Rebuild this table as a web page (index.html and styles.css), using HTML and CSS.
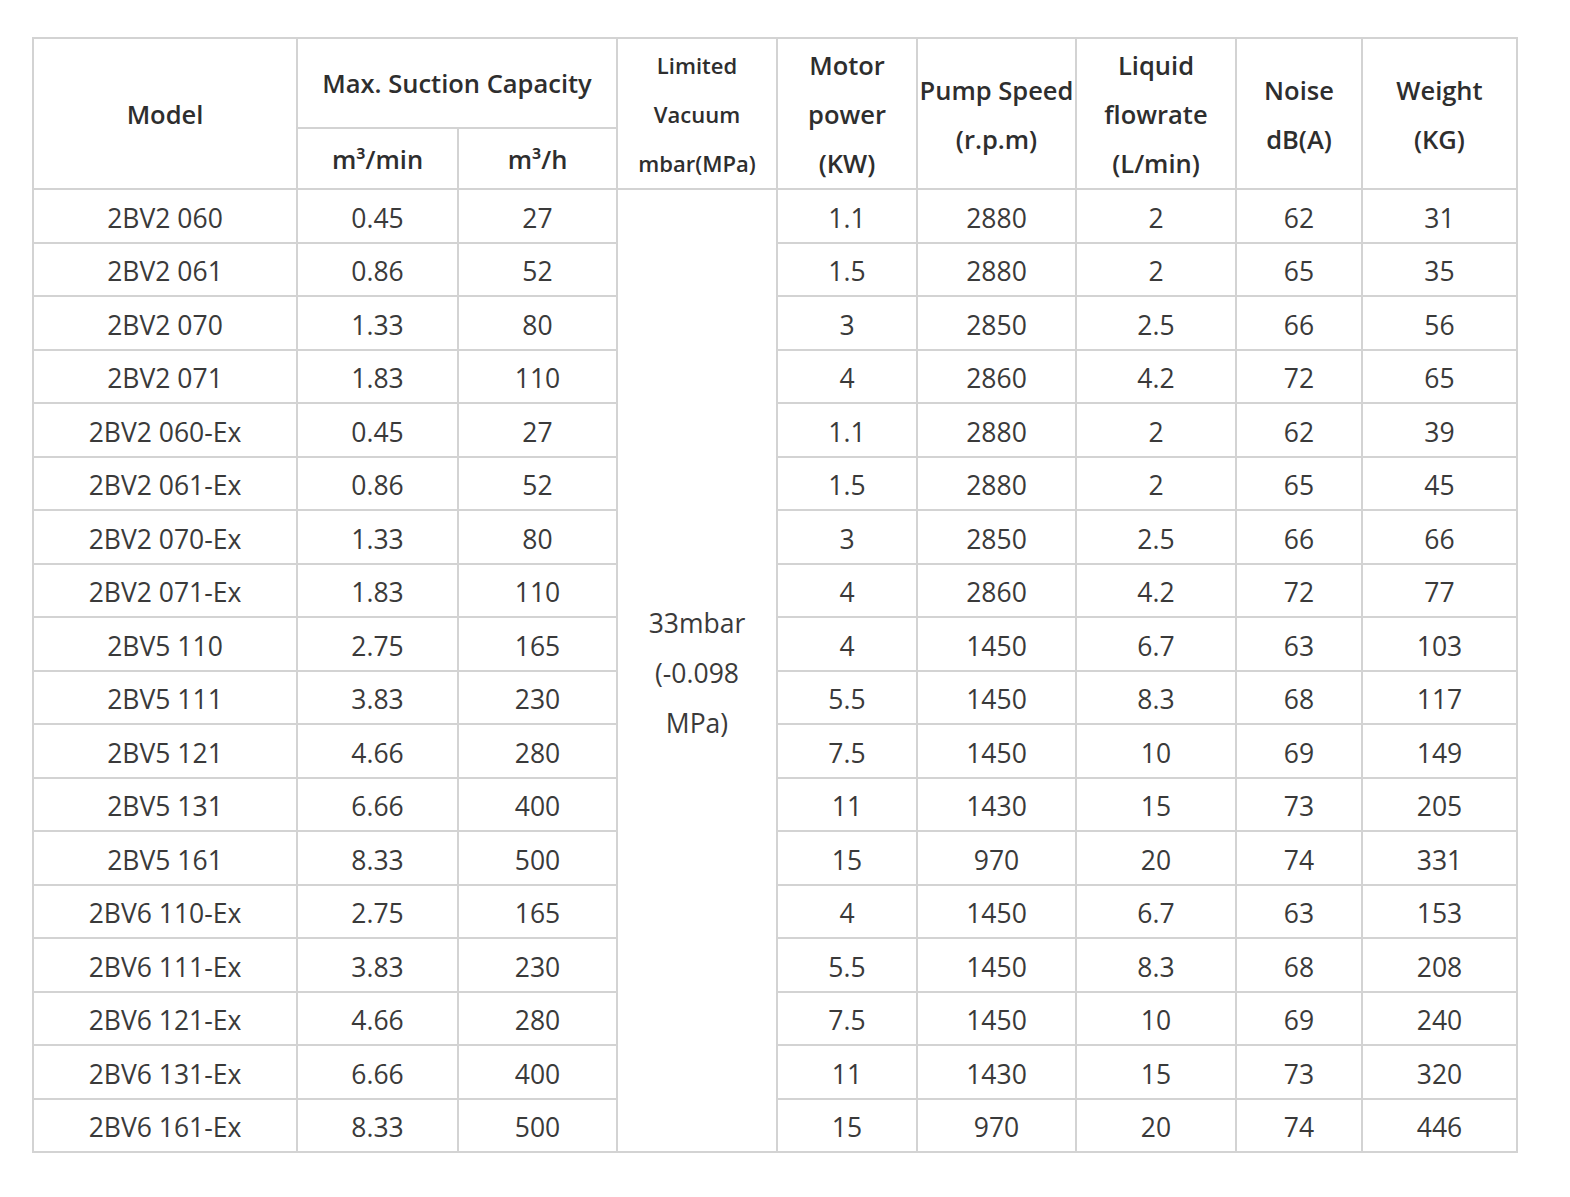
FILE: index.html
```html
<!DOCTYPE html>
<html lang="en">
<head>
<meta charset="utf-8">
<title>2BV Pump Specifications</title>
<link rel="stylesheet" href="styles.css">
</head>
<body>
<div class="page">
<table class="spec">
  <colgroup>
    <col class="c-model">
    <col class="c-min">
    <col class="c-h">
    <col class="c-vac">
    <col class="c-motor">
    <col class="c-speed">
    <col class="c-flow">
    <col class="c-noise">
    <col class="c-weight">
  </colgroup>
  <thead>
    <tr class="h1">
      <th rowspan="2">Model</th>
      <th colspan="2">Max. Suction Capacity</th>
      <th rowspan="2" class="small">Limited<br>Vacuum<br>mbar(MPa)</th>
      <th rowspan="2">Motor<br>power<br>(KW)</th>
      <th rowspan="2">Pump Speed<br>(r.p.m)</th>
      <th rowspan="2">Liquid<br>flowrate<br>(L/min)</th>
      <th rowspan="2">Noise<br>dB(A)</th>
      <th rowspan="2">Weight<br>(KG)</th>
    </tr>
    <tr class="h2">
      <th>m³/min</th>
      <th>m³/h</th>
    </tr>
  </thead>
  <tbody>
    <tr><td>2BV2 060</td><td>0.45</td><td>27</td><td rowspan="18" class="vac">33mbar<br>(-0.098<br>MPa)</td><td>1.1</td><td>2880</td><td>2</td><td>62</td><td>31</td></tr>
    <tr><td>2BV2 061</td><td>0.86</td><td>52</td><td>1.5</td><td>2880</td><td>2</td><td>65</td><td>35</td></tr>
    <tr><td>2BV2 070</td><td>1.33</td><td>80</td><td>3</td><td>2850</td><td>2.5</td><td>66</td><td>56</td></tr>
    <tr><td>2BV2 071</td><td>1.83</td><td>110</td><td>4</td><td>2860</td><td>4.2</td><td>72</td><td>65</td></tr>
    <tr><td>2BV2 060-Ex</td><td>0.45</td><td>27</td><td>1.1</td><td>2880</td><td>2</td><td>62</td><td>39</td></tr>
    <tr><td>2BV2 061-Ex</td><td>0.86</td><td>52</td><td>1.5</td><td>2880</td><td>2</td><td>65</td><td>45</td></tr>
    <tr><td>2BV2 070-Ex</td><td>1.33</td><td>80</td><td>3</td><td>2850</td><td>2.5</td><td>66</td><td>66</td></tr>
    <tr><td>2BV2 071-Ex</td><td>1.83</td><td>110</td><td>4</td><td>2860</td><td>4.2</td><td>72</td><td>77</td></tr>
    <tr><td>2BV5 110</td><td>2.75</td><td>165</td><td>4</td><td>1450</td><td>6.7</td><td>63</td><td>103</td></tr>
    <tr><td>2BV5 111</td><td>3.83</td><td>230</td><td>5.5</td><td>1450</td><td>8.3</td><td>68</td><td>117</td></tr>
    <tr><td>2BV5 121</td><td>4.66</td><td>280</td><td>7.5</td><td>1450</td><td>10</td><td>69</td><td>149</td></tr>
    <tr><td>2BV5 131</td><td>6.66</td><td>400</td><td>11</td><td>1430</td><td>15</td><td>73</td><td>205</td></tr>
    <tr><td>2BV5 161</td><td>8.33</td><td>500</td><td>15</td><td>970</td><td>20</td><td>74</td><td>331</td></tr>
    <tr><td>2BV6 110-Ex</td><td>2.75</td><td>165</td><td>4</td><td>1450</td><td>6.7</td><td>63</td><td>153</td></tr>
    <tr><td>2BV6 111-Ex</td><td>3.83</td><td>230</td><td>5.5</td><td>1450</td><td>8.3</td><td>68</td><td>208</td></tr>
    <tr><td>2BV6 121-Ex</td><td>4.66</td><td>280</td><td>7.5</td><td>1450</td><td>10</td><td>69</td><td>240</td></tr>
    <tr><td>2BV6 131-Ex</td><td>6.66</td><td>400</td><td>11</td><td>1430</td><td>15</td><td>73</td><td>320</td></tr>
    <tr><td>2BV6 161-Ex</td><td>8.33</td><td>500</td><td>15</td><td>970</td><td>20</td><td>74</td><td>446</td></tr>
  </tbody>
</table>
</div>
</body>
</html>
```

FILE: styles.css
```css
html, body {
  margin: 0;
  padding: 0;
  background: #ffffff;
}

.page {
  padding: 37px 0 0 32px;
}

.spec {
  border-collapse: collapse;
  table-layout: fixed;
  width: 1484px;
  font-family: "Open Sans", "Noto Sans", sans-serif;
  color: #333333;
}

.c-model { width: 264px; }
.c-min { width: 161px; }
.c-h { width: 159px; }
.c-vac { width: 160px; }
.c-motor { width: 140px; }
.c-speed { width: 159px; }
.c-flow { width: 160px; }
.c-noise { width: 126px; }
.c-weight { width: 155px; }

.spec th,
.spec td {
  border: 2px solid #d3d3d3;
  text-align: center;
  vertical-align: middle;
  padding: 0;
}

.spec th {
  font-weight: 600;
  font-size: 25.5px;
  line-height: 49px;
  color: #2e2e2e;
  padding-top: 2px;
}

.spec th.small {
  font-size: 22px;
}

.h1 { height: 86px; }
.h2 { height: 59px; }

.spec td {
  font-size: 26.5px;
  font-weight: 400;
  height: 47.5px;
  padding-top: 4px;
  line-height: 30px;
  color: #3a3a3a;
}

.spec td.vac {
  line-height: 50px;
}
```
